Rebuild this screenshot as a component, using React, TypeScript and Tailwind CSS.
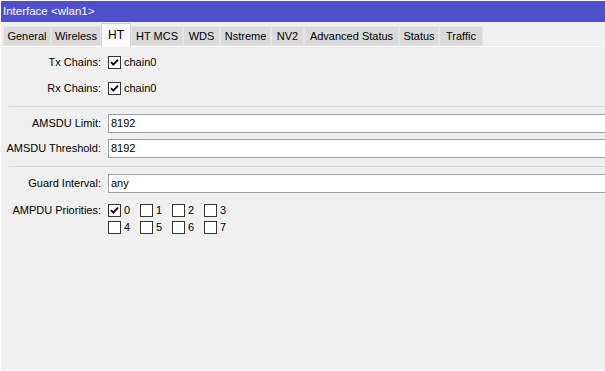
import React from "react";

const tabs: { name: string; w: number; active?: boolean }[] = [
  { name: "General", w: 48 },
  { name: "Wireless", w: 50 },
  { name: "HT", w: 30, active: true },
  { name: "HT MCS", w: 52 },
  { name: "WDS", w: 37 },
  { name: "Nstreme", w: 51 },
  { name: "NV2", w: 33 },
  { name: "Advanced Status", w: 95 },
  { name: "Status", w: 40 },
  { name: "Traffic", w: 44 },
];

function Check({ checked }: { checked?: boolean }) {
  return (
    <span className="w-[13px] h-[13px] border border-[#333333] bg-white flex items-center justify-center shrink-0">
      {checked && (
        <svg width="9" height="9" viewBox="0 0 9 9">
          <path d="M1 4.2 L3.3 6.6 L8 1.6" fill="none" stroke="#000" strokeWidth="1.8" />
        </svg>
      )}
    </span>
  );
}

function Label({ children }: { children: React.ReactNode }) {
  return <div className="w-[101px] shrink-0 text-right pr-[1px]">{children}</div>;
}

function Input({ value }: { value: string }) {
  return (
    <div className="flex-1 h-[19px] bg-white border-y border-l border-[#a0a0a0] flex items-center pl-[2px]">
      {value}
    </div>
  );
}

export default function App() {
  return (
    <div
      className="w-[605px] h-[371px] bg-[#f0f0f0] border-l border-t border-b border-white text-[11px] text-black overflow-hidden flex flex-col"
      style={{ fontFamily: '"Liberation Sans", Arial, sans-serif' }}
    >
      <div className="h-[21px] shrink-0 bg-[#4e4fca] text-white flex items-center pl-[2px] text-[11.5px]">
        Interface &lt;wlan1&gt;
      </div>
      <div className="h-[25px] shrink-0 flex items-end pl-[2px] border-b border-white">
        {tabs.map((t) =>
          t.active ? (
            <div
              key={t.name}
              style={{ width: t.w }}
              className="h-[24px] bg-[#fbfbfb] border-x border-t border-[#d2d2d2] flex items-center justify-center text-[12px] -mb-[1px] pb-[2px]"
            >
              {t.name}
            </div>
          ) : (
            <div
              key={t.name}
              style={{ width: t.w }}
              className="h-[20px] bg-[#dadada] border border-[#e6e6e6] flex items-center justify-center"
            >
              {t.name}
            </div>
          )
        )}
      </div>
      <div className="flex flex-col pl-[0px]">
        <div className="h-[20px] mt-[5px] flex items-center">
          <Label>Tx Chains:</Label>
          <div className="ml-[6px] flex items-center gap-[3px]">
            <Check checked />
            <span>chain0</span>
          </div>
        </div>
        <div className="h-[20px] mt-[6px] flex items-center">
          <Label>Rx Chains:</Label>
          <div className="ml-[6px] flex items-center gap-[3px]">
            <Check checked />
            <span>chain0</span>
          </div>
        </div>
        <div className="h-px bg-[#dcdcdc] ml-[8px] mt-[8px]" />
        <div className="h-[19px] mt-[7px] flex items-center">
          <Label>AMSDU Limit:</Label>
          <div className="ml-[6px] flex-1 flex">
            <Input value="8192" />
          </div>
        </div>
        <div className="h-[19px] mt-[6px] flex items-center">
          <Label>AMSDU Threshold:</Label>
          <div className="ml-[6px] flex-1 flex">
            <Input value="8192" />
          </div>
        </div>
        <div className="h-px bg-[#dcdcdc] ml-[8px] mt-[8px]" />
        <div className="h-[19px] mt-[7px] flex items-center">
          <Label>Guard Interval:</Label>
          <div className="ml-[6px] flex-1 flex">
            <Input value="any" />
          </div>
        </div>
        <div className="mt-[10px] flex items-start">
          <div className="w-[101px] shrink-0 text-right pr-[1px] h-[14px] flex items-center justify-end">
            AMPDU Priorities:
          </div>
          <div className="ml-[6px] grid grid-cols-[32px_32px_32px_32px] gap-y-[3px]">
            {[0, 1, 2, 3, 4, 5, 6, 7].map((n) => (
              <div key={n} className="flex items-center gap-[3px] h-[14px]">
                <Check checked={n === 0} />
                <span>{n}</span>
              </div>
            ))}
          </div>
        </div>
      </div>
    </div>
  );
}
